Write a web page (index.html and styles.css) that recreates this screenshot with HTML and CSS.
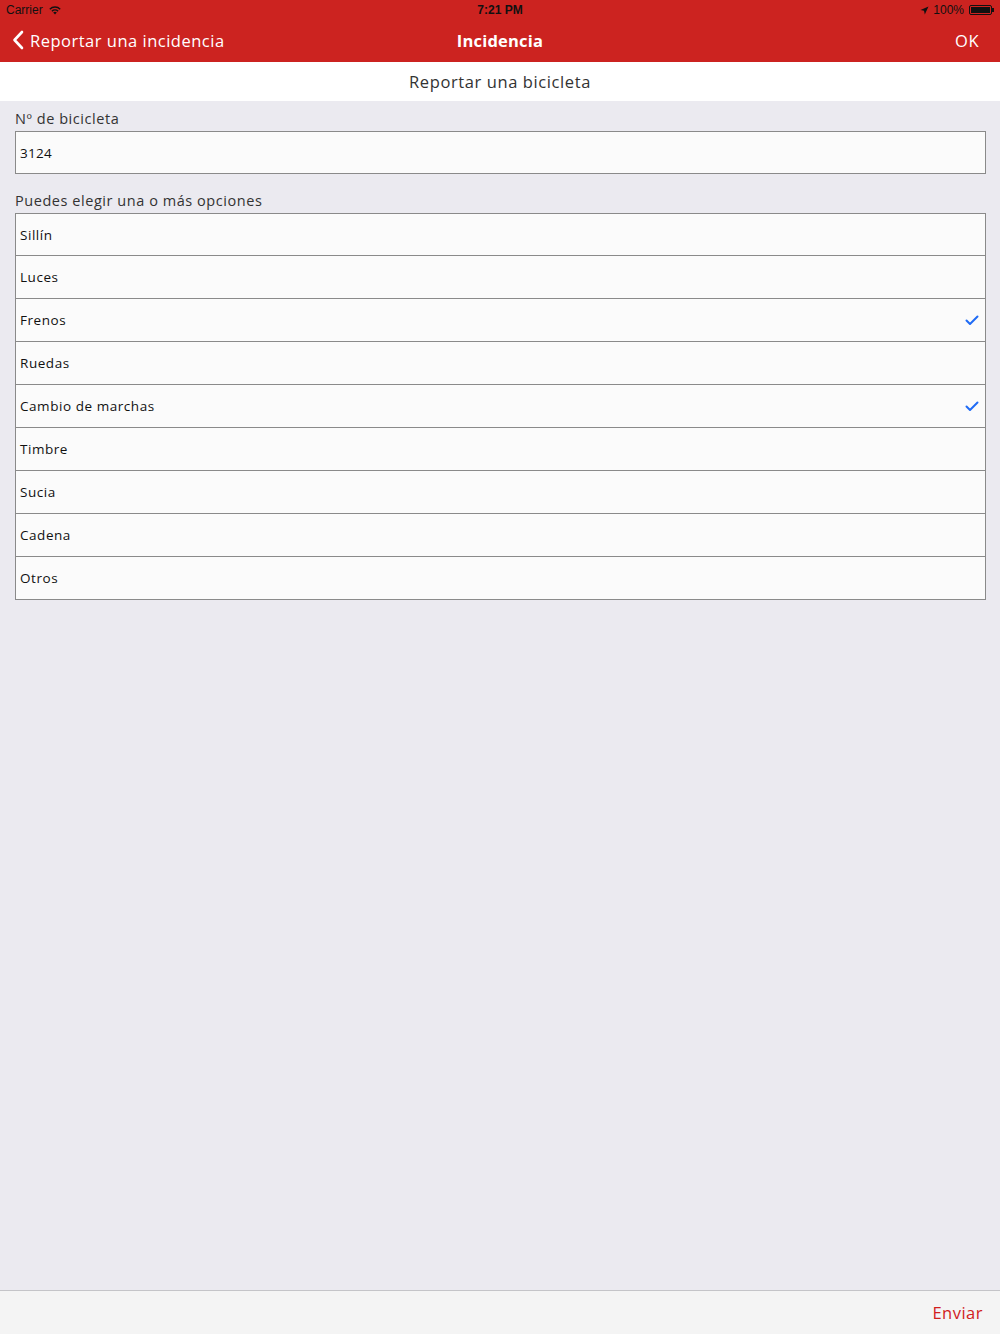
FILE: index.html
```html
<!DOCTYPE html>
<html lang="es">
<head>
<meta charset="utf-8">
<title>Incidencia</title>
<link rel="stylesheet" href="styles.css">
</head>
<body>
<div class="app">
  <header class="topbar">
    <div class="status">
      <div class="status-left">
        <span>Carrier</span>
        <svg class="wifi" width="14" height="10" viewBox="0 0 14 10"><path d="M7 9.5 L5.2 7.6 A2.6 2.6 0 0 1 8.8 7.6 Z" fill="#111"/><path d="M3.4 5.8 A5.1 5.1 0 0 1 10.6 5.8 L9.6 6.8 A3.7 3.7 0 0 0 4.4 6.8 Z" fill="#111"/><path d="M1.3 3.7 A8 8 0 0 1 12.7 3.7 L11.7 4.7 A6.6 6.6 0 0 0 2.3 4.7 Z" fill="#111"/></svg>
      </div>
      <div class="status-time">7:21 PM</div>
      <div class="status-right">
        <svg width="9" height="9" viewBox="0 0 9 9"><path d="M8.5 0.5 L0.5 4 L4 4.8 L4.8 8.5 Z" fill="#111"/></svg>
        <span>100%</span>
        <span class="battery"><span class="battery-fill"></span></span><span class="battery-tip"></span>
      </div>
    </div>
    <nav class="navbar">
      <div class="nav-back">
        <svg width="12" height="20" viewBox="0 0 12 20"><path d="M10 2 L2.5 10 L10 18" fill="none" stroke="#fff" stroke-width="2.6" stroke-linecap="round" stroke-linejoin="round"/></svg>
        <span>Reportar una incidencia</span>
      </div>
      <div class="nav-title">Incidencia</div>
      <div class="nav-ok">OK</div>
    </nav>
  </header>
  <div class="subtitle">Reportar una bicicleta</div>
  <main class="content">
    <div class="field-label">Nº de bicicleta</div>
    <div class="input">3124</div>
    <div class="field-label second">Puedes elegir una o más opciones</div>
    <ul class="options">
      <li class="option">Sillín</li>
      <li class="option">Luces</li>
      <li class="option checked">Frenos<svg class="check" width="14" height="11" viewBox="0 0 14 11"><path d="M1.5 5.5 L5 9 L12.5 1.5" fill="none" stroke="#1f6bf5" stroke-width="2" stroke-linecap="round" stroke-linejoin="round"/></svg></li>
      <li class="option">Ruedas</li>
      <li class="option checked">Cambio de marchas<svg class="check" width="14" height="11" viewBox="0 0 14 11"><path d="M1.5 5.5 L5 9 L12.5 1.5" fill="none" stroke="#1f6bf5" stroke-width="2" stroke-linecap="round" stroke-linejoin="round"/></svg></li>
      <li class="option">Timbre</li>
      <li class="option">Sucia</li>
      <li class="option">Cadena</li>
      <li class="option">Otros</li>
    </ul>
  </main>
  <footer class="toolbar">
    <span class="send">Enviar</span>
  </footer>
</div>
</body>
</html>
```
FILE: styles.css
```css
* { box-sizing: border-box; }
html, body { margin: 0; padding: 0; }
body {
  font-family: "Open Sans", "Lato", "Noto Sans", sans-serif;
  background: #ebeaf0;
  color: #222;
}
.app {
  width: 1000px;
  height: 1334px;
  display: flex;
  flex-direction: column;
}
.topbar { background: #cc2320; color: #fff; }
.status {
  height: 20px;
  display: flex;
  align-items: center;
  justify-content: space-between;
  padding: 0 6px;
  font-size: 12px;
  color: #111;
  font-family: "Liberation Sans", "Open Sans", sans-serif;
}
.status-left { display: flex; align-items: center; gap: 5px; width: 200px; }
.status-time { font-weight: 700; font-size: 12px; }
.status-right { display: flex; align-items: center; gap: 4px; width: 200px; justify-content: flex-end; }
.battery {
  display: inline-block;
  width: 23px;
  height: 10px;
  border: 1px solid #111;
  border-radius: 2px;
  padding: 1px;
  margin-left: 1px;
}
.battery-fill { display: block; width: 100%; height: 100%; background: #111; }
.battery-tip { display: inline-block; width: 2px; height: 4px; background: #111; margin-left: -4px; }
.navbar {
  height: 42px;
  display: flex;
  align-items: center;
  justify-content: space-between;
  padding: 0 12px 2px 12px;
  font-size: 16.5px;
}
.nav-back { display: flex; align-items: center; gap: 6px; width: 300px; letter-spacing: 0.5px; }
.nav-title { font-weight: 700; letter-spacing: 0.2px; }
.nav-ok { width: 300px; text-align: right; padding-right: 9px; letter-spacing: 0.5px; }
.subtitle {
  height: 39px;
  background: #fff;
  display: flex;
  align-items: center;
  justify-content: center;
  font-size: 16.5px;
  color: #333;
  letter-spacing: 0.6px;
}
.content { flex: 1; padding: 8px 14px 0 15px; }
.field-label {
  font-size: 14.5px;
  color: #333;
  height: 22px;
  line-height: 20px;
  letter-spacing: 0.55px;
}
.field-label.second { margin-top: 17px; }
.input {
  height: 43px;
  background: #fbfbfb;
  border: 1px solid #8a8a8a;
  display: flex;
  align-items: center;
  padding: 0 4px;
  font-size: 13.5px;
  color: #111;
  letter-spacing: 0.3px;
}
.options {
  list-style: none;
  margin: 0;
  padding: 0;
  border: 1px solid #8a8a8a;
  background: #fbfbfb;
}
.option {
  height: 43px;
  display: flex;
  align-items: center;
  justify-content: space-between;
  padding: 0 6px 0 4px;
  font-size: 13.5px;
  color: #111;
  border-top: 1px solid #8a8a8a;
  letter-spacing: 0.55px;
}
.option:first-child { border-top: none; height: 41px; }
.toolbar {
  height: 44px;
  background: #f4f4f4;
  border-top: 1px solid #c4c4c8;
  display: flex;
  align-items: center;
  justify-content: flex-end;
  padding: 0 17px;
}
.send { color: #d1201d; font-size: 16.5px; letter-spacing: 0.5px; }
```
